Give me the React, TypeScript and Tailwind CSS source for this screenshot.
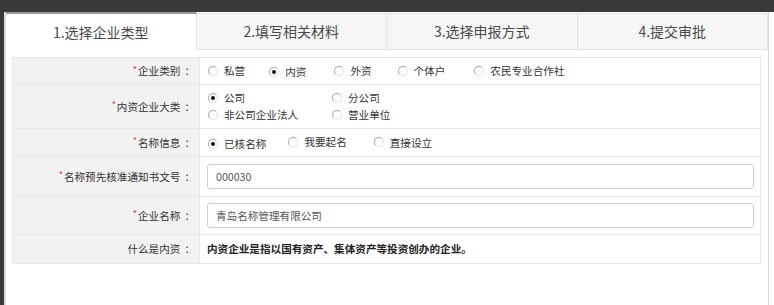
import React from "react";

const tabs = ["1.选择企业类型", "2.填写相关材料", "3.选择申报方式", "4.提交审批"];

const Radio = ({ checked }: { checked?: boolean }) => (
  <span className="inline-flex items-center justify-center w-[10px] h-[10px] rounded-full border border-[#a8a8a8] border-r-[#e2e2e2] border-b-[#e2e2e2] bg-white shrink-0">
    {checked && <span className="w-[4px] h-[4px] rounded-full bg-[#111]" />}
  </span>
);

const Opt = ({ label, checked }: { label: string; checked?: boolean }) => (
  <span className="inline-flex items-center gap-[6px]">
    <Radio checked={checked} />
    <span>{label}</span>
  </span>
);

const Row = ({
  label,
  required = true,
  h,
  children,
}: {
  label: string;
  required?: boolean;
  h: string;
  children: React.ReactNode;
}) => (
  <div className={`flex border-b border-[#e6e6e6] last:border-b-0 ${h}`}>
    <div className="w-[187px] shrink-0 bg-[#f2f2f2] border-r border-[#e6e6e6] flex items-center justify-end pr-[4px]">
      {required && <span className="text-[#e4393c] text-[9px] mr-[1px] -mt-[3px]">*</span>}
      <span>{label}</span>
      <span className="ml-[4px]">：</span>
    </div>
    <div className="flex-1 flex items-center">{children}</div>
  </div>
);

export default function App() {
  return (
    <div
      className="w-[774px] h-[305px] bg-[#3a3a3a] pl-[4px] pt-[12px] overflow-hidden text-[#333] text-[10.6px]"
      style={{ fontFamily: '"Noto Sans CJK SC", "Noto Sans", sans-serif' }}
    >
      <div className="h-full w-[770px] bg-white">
        <div className="h-full w-[765px] border-l-2 border-r border-[#dcdcdc]">
          <div className="grid grid-cols-4 h-[38px] text-[14px] text-[#4a4a4a]">
            {tabs.map((t, i) =>
              i === 0 ? (
                <div
                  key={t}
                  className="flex items-center justify-center bg-white border-t-2 border-[#9a9a9a] border-r border-r-[#e2e2e2]"
                >
                  {t}
                </div>
              ) : (
                <div
                  key={t}
                  className="flex items-center justify-center bg-[#f6f6f6] border-t border-b border-r border-[#e2e2e2] mt-[1px]"
                >
                  {t}
                </div>
              )
            )}
          </div>

          <div className="mt-[7px] ml-[6px] mr-[7px] border border-[#e6e6e6]">
            <Row label="企业类别" h="h-[27px]">
              <div className="flex items-center pl-[8px]">
                <span className="mr-[24px]"><Opt label="私营" /></span>
                <span className="mr-[28px]"><Opt label="内资" checked /></span>
                <span className="mr-[26px]"><Opt label="外资" /></span>
                <span className="mr-[29px]"><Opt label="个体户" /></span>
                <Opt label="农民专业合作社" />
              </div>
            </Row>
            <Row label="内资企业大类" h="h-[44px]">
              <div className="grid grid-cols-[124px_124px] gap-y-[5px] pl-[8px] leading-[12px]">
                <Opt label="公司" checked />
                <Opt label="分公司" />
                <Opt label="非公司企业法人" />
                <Opt label="营业单位" />
              </div>
            </Row>
            <Row label="名称信息" h="h-[28px]">
              <div className="flex items-center pl-[8px]">
                <span className="mr-[22px]"><Opt label="已核名称" checked /></span>
                <span className="mr-[27px]"><Opt label="我要起名" /></span>
                <Opt label="直接设立" />
              </div>
            </Row>
            <Row label="名称预先核准通知书文号" h="h-[40px]">
              <div className="flex-1 pl-[7px] pr-[6px]">
                <div className="h-[25px] border border-[#cfcfcf] rounded-[3px] flex items-center pl-[8px] text-[#555]">
                  000030
                </div>
              </div>
            </Row>
            <Row label="企业名称" h="h-[38px]">
              <div className="flex-1 pl-[7px] pr-[6px]">
                <div className="h-[25px] border border-[#cfcfcf] rounded-[3px] flex items-center pl-[8px] text-[#555]">
                  青岛名称管理有限公司
                </div>
              </div>
            </Row>
            <Row label="什么是内资" required={false} h="h-[28px]">
              <span className="pl-[7px] font-bold text-[#222]">
                内资企业是指以国有资产、集体资产等投资创办的企业。
              </span>
            </Row>
          </div>
        </div>
      </div>
    </div>
  );
}
